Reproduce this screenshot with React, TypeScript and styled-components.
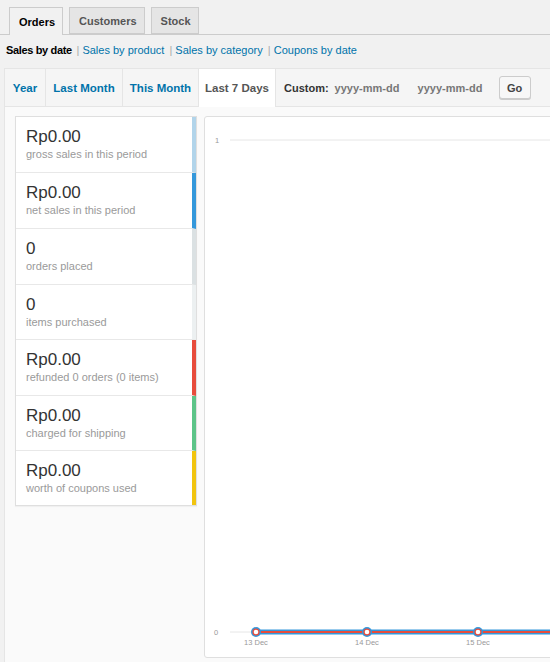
import React from "react"
import styled, { createGlobalStyle } from "styled-components"

const GlobalStyle = createGlobalStyle`
  html, body {
    margin: 0;
    padding: 0;
    background: #f1f1f1;
    overflow: hidden;
  }
  body {
    font-family: "Liberation Sans", Arial, sans-serif;
    color: #444;
  }
`

const Page = styled.div`
  width: 640px;
  padding-top: 7px;
`

const NavTabs = styled.nav`
  display: flex;
  gap: 6px;
  padding-left: 9px;
  border-bottom: 1px solid #ccc;
  height: 27px;
`

const NavTab = styled.a<{ $active?: boolean }>`
  display: flex;
  align-items: center;
  padding: 0 7px 0 9px;
  height: ${p => (p.$active ? "28px" : "27px")};
  box-sizing: border-box;
  border: 1px solid #ccc;
  border-bottom: ${p => (p.$active ? "none" : "1px solid #ccc")};
  background: ${p => (p.$active ? "#f1f1f1" : "#e5e5e5")};
  color: ${p => (p.$active ? "#000" : "#555")};
  font-size: 11px;
  font-weight: 700;
  text-decoration: none;
`

const SubNav = styled.ul`
  display: flex;
  list-style: none;
  margin: 0;
  padding: 9px 0 0 6px;
  height: 26px;
  box-sizing: border-box;
  font-size: 11px;
  color: #666;
`

const SubItem = styled.li<{ $current?: boolean }>`
  white-space: pre;
  color: ${p => (p.$current ? "#000" : "#0073aa")};
  font-weight: ${p => (p.$current ? 700 : 400)};
  letter-spacing: ${p => (p.$current ? "-0.35px" : "0")};
`

const Sep = styled.span`
  color: #aaa;
  font-weight: 400;
  letter-spacing: 0;
  margin-left: 2px;
`

const Postbox = styled.div`
  margin: 7px 0 0 4px;
  border: 1px solid #e5e5e5;
  background: #fafafa;
`

const RangeBar = styled.div`
  display: flex;
  align-items: center;
  height: 37px;
  background: #f5f5f5;
  border-bottom: 1px solid #e5e5e5;
`

const RangeTab = styled.a<{ $active?: boolean; $w: number }>`
  display: flex;
  align-items: center;
  justify-content: center;
  width: ${p => p.$w}px;
  height: ${p => (p.$active ? "38px" : "37px")};
  align-self: flex-start;
  box-sizing: border-box;
  border-right: 1px solid #e5e5e5;
  background: ${p => (p.$active ? "#fff" : "transparent")};
  color: ${p => (p.$active ? "#555" : "#0073aa")};
  font-size: 11.5px;
  font-weight: 700;
  text-decoration: none;
`

const Custom = styled.div`
  display: flex;
  align-items: center;
  padding-left: 8px;
  font-size: 11px;
  font-weight: 700;
  color: #333;
`

const DateInput = styled.span`
  color: #777;
  font-weight: 700;
  margin-left: 6px;
  width: 77px;
`

const GoButton = styled.button`
  margin-left: 4px;
  width: 32px;
  height: 23px;
  border: 1px solid #ccc;
  border-radius: 3px;
  background: #f7f7f7;
  box-shadow: 0 1px 0 #ccc;
  font-family: inherit;
  font-size: 11px;
  font-weight: 700;
  color: #444;
  padding: 0;
`

const Inside = styled.div`
  display: flex;
  gap: 7px;
  padding: 9px 0 10px 10px;
  align-items: flex-start;
`

const Legend = styled.ul`
  list-style: none;
  margin: 0;
  padding: 0;
  width: 180px;
  flex: 0 0 180px;
  background: #fff;
  border: 1px solid #dfdfdf;
  box-shadow: 0 1px 1px rgba(0, 0, 0, 0.04);
`

const LegendItem = styled.li<{ $color: string; $h: number }>`
  height: ${p => p.$h}px;
  box-sizing: border-box;
  padding: 10px 0 0 10px;
  border-bottom: 1px solid #e8e8e8;
  border-right: 4px solid ${p => p.$color};
  &:last-child {
    border-bottom: none;
  }
`

const Amount = styled.div`
  font-size: 17px;
  line-height: 20px;
  color: #333;
`

const Caption = styled.div`
  font-size: 11px;
  line-height: 14px;
  color: #9a9a9a;
`

const ChartBox = styled.div`
  flex: 1;
  height: 542px;
  box-sizing: border-box;
  background: #fff;
  border: 1px solid #dfdfdf;
  border-radius: 3px;
  overflow: hidden;
`

const legend = [
  { amount: "Rp0.00", caption: "gross sales in this period", color: "#b1d4ea", h: 56 },
  { amount: "Rp0.00", caption: "net sales in this period", color: "#3498db", h: 56 },
  { amount: "0", caption: "orders placed", color: "#dbe1e3", h: 56 },
  { amount: "0", caption: "items purchased", color: "#ecf0f1", h: 55 },
  { amount: "Rp0.00", caption: "refunded 0 orders (0 items)", color: "#e74c3c", h: 56 },
  { amount: "Rp0.00", caption: "charged for shipping", color: "#5cc488", h: 55 },
  { amount: "Rp0.00", caption: "worth of coupons used", color: "#f1c40f", h: 54 },
]

const points = [
  { x: 51, label: "13 Dec" },
  { x: 162, label: "14 Dec" },
  { x: 273, label: "15 Dec" },
]

const Chart = () => (
  <svg width="440" height="540" style={{ display: "block" }}>
    <text x="10" y="26" fontSize="7.5" fill="#999" fontFamily="Liberation Sans, sans-serif">1</text>
    <line x1="25" y1="23" x2="440" y2="23" stroke="#e6e6e6" strokeWidth="1" />
    <text x="9" y="518" fontSize="7.5" fill="#999" fontFamily="Liberation Sans, sans-serif">0</text>
    <line x1="25" y1="515" x2="440" y2="515" stroke="#e6e6e6" strokeWidth="1" />
    <line x1="51" y1="515" x2="440" y2="515" stroke="#3498db" strokeWidth="5" />
    <line x1="51" y1="515" x2="440" y2="515" stroke="#e74c3c" strokeWidth="2" />
    {points.map(p => (
      <g key={p.label}>
        <circle cx={p.x} cy="515" r="5" fill="#3498db" />
        <circle cx={p.x} cy="515" r="3.6" fill="#e74c3c" />
        <circle cx={p.x} cy="515" r="2.3" fill="#fff" />
        <text
          x={p.x}
          y="528"
          fontSize="7.5"
          fill="#999"
          textAnchor="middle"
          fontFamily="Liberation Sans, sans-serif"
        >
          {p.label}
        </text>
      </g>
    ))}
    <circle cx="384" cy="515" r="5" fill="#3498db" />
    <circle cx="384" cy="515" r="3.6" fill="#e74c3c" />
    <circle cx="384" cy="515" r="2.3" fill="#fff" />
  </svg>
)

const App = () => (
  <>
    <GlobalStyle />
    <Page>
      <NavTabs>
        <NavTab $active>Orders</NavTab>
        <NavTab>Customers</NavTab>
        <NavTab>Stock</NavTab>
      </NavTabs>
      <SubNav>
        <SubItem $current>Sales by date </SubItem>
        <SubItem><Sep>| </Sep>Sales by product </SubItem>
        <SubItem><Sep>| </Sep>Sales by category </SubItem>
        <SubItem><Sep>| </Sep>Coupons by date</SubItem>
      </SubNav>
      <Postbox>
        <RangeBar>
          <RangeTab $w={41}>Year</RangeTab>
          <RangeTab $w={77}>Last Month</RangeTab>
          <RangeTab $w={76}>This Month</RangeTab>
          <RangeTab $w={77} $active>Last 7 Days</RangeTab>
          <Custom>
            Custom:
            <DateInput>yyyy-mm-dd</DateInput>
            <DateInput>yyyy-mm-dd</DateInput>
            <GoButton>Go</GoButton>
          </Custom>
        </RangeBar>
        <Inside>
          <Legend>
            {legend.map(item => (
              <LegendItem key={item.caption} $color={item.color} $h={item.h}>
                <Amount>{item.amount}</Amount>
                <Caption>{item.caption}</Caption>
              </LegendItem>
            ))}
          </Legend>
          <ChartBox>
            <Chart />
          </ChartBox>
        </Inside>
      </Postbox>
    </Page>
  </>
)

export default App
